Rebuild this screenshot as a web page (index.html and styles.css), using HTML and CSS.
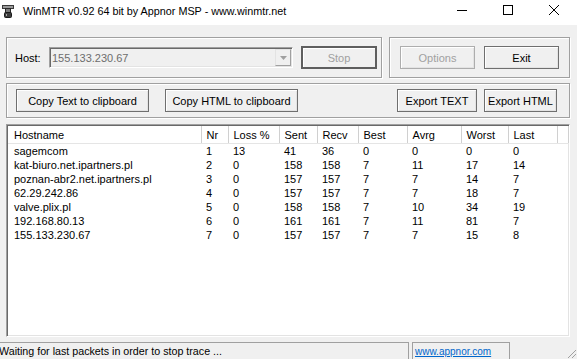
FILE: index.html
```html
<!DOCTYPE html>
<html>
<head>
	<title>WinMTR</title>
	<link rel="stylesheet" href="styles.css">
</head>
<body>

<div class="window">

	<!-- Title bar -->
	<div class="titlebar">
		<svg class="appIcon" width="12" height="13" viewBox="0 0 12 13">
			<rect x="0.5" y="0.5" width="11" height="3" fill="#9a9a9a" stroke="#3a3a3a"/>
			<rect x="3.5" y="3.5" width="5" height="4" fill="#7a7a7a" stroke="#2a2a2a"/>
			<rect x="2.5" y="7.5" width="7" height="5" rx="1" fill="#3c3c3c" stroke="#1a1a1a"/>
			<rect x="4" y="9" width="1" height="2" fill="#aaa"/>
		</svg>
		<span class="title">WinMTR v0.92 64 bit by Appnor MSP - www.winmtr.net</span>
		<div class="captionButtons">
			<span class="cap">
				<svg width="10" height="10" viewBox="0 0 10 10"><path d="M0 5.5h10" stroke="#000" stroke-width="1"/></svg>
			</span>
			<span class="cap">
				<svg width="10" height="10" viewBox="0 0 10 10"><rect x="0.5" y="0.5" width="9" height="9" fill="none" stroke="#000"/></svg>
			</span>
			<span class="cap">
				<svg width="10" height="10" viewBox="0 0 10 10"><path d="M0 0L10 10M10 0L0 10" stroke="#000" stroke-width="1"/></svg>
			</span>
		</div>
	</div>

	<div class="client">

		<div class="topRow">
			<div class="group hostGroup">
				<span class="hostLabel">Host:</span>
				<div class="combo">
					<span class="comboText">155.133.230.67</span>
					<span class="comboArrow">
						<svg width="7" height="4" viewBox="0 0 7 4"><path d="M0 0h7L3.5 4z" fill="#a0a0a0"/></svg>
					</span>
				</div>
				<button class="btn btnDefault btnDisabled stopBtn">Stop</button>
			</div>
			<div class="group actionGroup">
				<button class="btn btnDisabled">Options</button>
				<button class="btn">Exit</button>
			</div>
		</div>

		<div class="group exportGroup">
			<button class="btn copyBtn">Copy Text to clipboard</button>
			<button class="btn copyBtn">Copy HTML to clipboard</button>
			<span class="spacer"></span>
			<button class="btn exportText">Export TEXT</button>
			<button class="btn exportHtml">Export HTML</button>
		</div>

		<div class="listview">
			<table>
				<colgroup>
					<col style="width:193px">
					<col style="width:27px">
					<col style="width:51px">
					<col style="width:38px">
					<col style="width:41px">
					<col style="width:49px">
					<col style="width:54px">
					<col style="width:47px">
					<col style="width:49px">
					<col>
				</colgroup>
				<thead>
					<tr>
						<th>Hostname</th><th>Nr</th><th>Loss %</th><th>Sent</th><th>Recv</th>
						<th>Best</th><th>Avrg</th><th>Worst</th><th>Last</th><th class="filler"></th>
					</tr>
				</thead>
				<tbody>
					<tr><td>sagemcom</td><td>1</td><td>13</td><td>41</td><td>36</td><td>0</td><td>0</td><td>0</td><td>0</td><td></td></tr>
					<tr><td>kat-biuro.net.ipartners.pl</td><td>2</td><td>0</td><td>158</td><td>158</td><td>7</td><td>11</td><td>17</td><td>14</td><td></td></tr>
					<tr><td>poznan-abr2.net.ipartners.pl</td><td>3</td><td>0</td><td>157</td><td>157</td><td>7</td><td>7</td><td>14</td><td>7</td><td></td></tr>
					<tr><td>62.29.242.86</td><td>4</td><td>0</td><td>157</td><td>157</td><td>7</td><td>7</td><td>18</td><td>7</td><td></td></tr>
					<tr><td>valve.plix.pl</td><td>5</td><td>0</td><td>158</td><td>158</td><td>7</td><td>10</td><td>34</td><td>19</td><td></td></tr>
					<tr><td>192.168.80.13</td><td>6</td><td>0</td><td>161</td><td>161</td><td>7</td><td>11</td><td>81</td><td>7</td><td></td></tr>
					<tr><td>155.133.230.67</td><td>7</td><td>0</td><td>157</td><td>157</td><td>7</td><td>7</td><td>15</td><td>8</td><td></td></tr>
				</tbody>
			</table>
		</div>

	</div>

	<!-- Status bar -->
	<div class="statusbar">
		<div class="panel statusText">Waiting for last packets in order to stop trace ...</div>
		<div class="panel linkPanel"><a href="#">www.appnor.com</a></div>
		<svg class="grip" width="12" height="12" viewBox="0 0 12 12">
			<path d="M11 3L3 11M11 7L7 11" stroke="#a0a0a0" stroke-width="1"/>
		</svg>
	</div>

</div>

</body>
</html>
```

FILE: styles.css
```css
body{
	margin: 0;
	background: #f0f0f0;
	font-family: "Liberation Sans", Arial, sans-serif;
	font-size: 11px;
	color: #000;
}

.window{
	width: 577px;
	height: 359px;
	overflow: hidden;
	display: flex;
	flex-direction: column;
}

/* Title bar */
.titlebar{
	height: 25px;
	background: #fff;
	display: flex;
	align-items: center;
	flex-shrink: 0;
}

.appIcon{
	margin: 0 9px 2px 2px;
}

.title{
	font-size: 10.8px;
	margin-bottom: 3px;
	flex: 1;
}

.captionButtons{
	display: flex;
	height: 25px;
}

.cap{
	width: 46px;
	display: flex;
	align-items: center;
	justify-content: center;
	padding-bottom: 5px;
}

/* Dialog */
.client{
	padding: 12px 7px 0 6px;
	display: flex;
	flex-direction: column;
}

.topRow{
	display: flex;
	gap: 7px;
	height: 41px;
}

.group{
	border: 1px solid #a0a0a0;
	box-shadow: inset 1px 1px 0 #fff, 1px 1px 0 #fff;
	display: flex;
	align-items: center;
	box-sizing: border-box;
}

.hostGroup{
	width: 376px;
	padding-left: 8px;
}

.hostLabel{
	width: 34px;
}

.combo{
	width: 244px;
	height: 21px;
	box-sizing: border-box;
	border: 1px solid;
	border-color: #a0a0a0 #fff #fff #a0a0a0;
	box-shadow: inset 1px 1px 0 #696969, inset -1px -1px 0 #e3e3e3;
	display: flex;
	align-items: center;
	margin-right: 8px;
}

.comboText{
	flex: 1;
	color: #6d6d6d;
	padding-left: 2px;
}

.comboArrow{
	width: 16px;
	height: 17px;
	margin-right: 1px;
	box-sizing: border-box;
	border: 1px solid;
	border-color: #e3e3e3 #a0a0a0 #a0a0a0 #e3e3e3;
	display: flex;
	align-items: center;
	justify-content: center;
}

.actionGroup{
	flex: 1;
	padding-left: 10px;
	gap: 9px;
}

.btn{
	font-family: "Liberation Sans", Arial, sans-serif;
	font-size: 11px;
	color: #000;
	background: #f0f0f0;
	width: 75px;
	height: 23px;
	padding: 0;
	box-sizing: border-box;
	border: 1px solid #6f6f6f;
	box-shadow: inset 1px 1px 0 #fff, inset -1px -1px 0 #e3e3e3;
}

.btnDisabled{
	color: #a0a0a0;
	border-color: #adadad;
}

.btnDefault{
	border: 2px solid #5e5e5e;
	box-shadow: inset 1px 1px 0 #fff;
}

.stopBtn{
	width: 76px;
}

.exportGroup{
	margin-top: 5px;
	height: 35px;
	padding: 0 12px 0 9px;
	gap: 16px;
}

.copyBtn{
	width: 133px;
}

.spacer{
	flex: 1;
}

.exportText{
	width: 80px;
	margin-right: -9px;
}

.exportHtml{
	width: 73px;
}

/* Result list */
.listview{
	margin-top: 6px;
	height: 213px;
	box-sizing: border-box;
	background: #fff;
	border: 1px solid;
	border-color: #a0a0a0 #fff #fff #a0a0a0;
	box-shadow: inset 1px 1px 0 #696969, inset -1px -1px 0 #e3e3e3;
	padding: 1px 0 0 1px;
	overflow: hidden;
}

table{
	border-collapse: collapse;
	table-layout: fixed;
	width: 100%;
}

th{
	font-weight: normal;
	text-align: left;
	height: 17px;
	padding: 0 0 0 5px;
	border-right: 1px solid #d0d0d0;
	border-bottom: 1px solid #e5e5e5;
	white-space: nowrap;
	overflow: hidden;
}

th.filler{
	border-right: 1px solid #d0d0d0;
}

th:first-child, td:first-child{
	padding-left: 6px;
}

td{
	height: 14px;
	padding: 0 0 0 5px;
	white-space: nowrap;
	overflow: hidden;
	line-height: 14px;
}

/* Status bar */
.statusbar{
	margin-top: auto;
	height: 17px;
	display: flex;
	position: relative;
	font-size: 10.7px;
}

.panel{
	border-top: 1px solid #a0a0a0;
	line-height: 16px;
	white-space: nowrap;
}

.statusText{
	width: 409px;
	border-right: 1px solid #a0a0a0;
	margin-left: -1px;
}

.linkPanel{
	margin-left: 3px;
	width: 94px;
	padding-left: 2px;
	border-left: 1px solid #a0a0a0;
	border-right: 1px solid #a0a0a0;
}

.linkPanel a{
	color: #0066cc;
	font-size: 10px;
}

.grip{
	position: absolute;
	right: 0;
	bottom: 0;
}
```
